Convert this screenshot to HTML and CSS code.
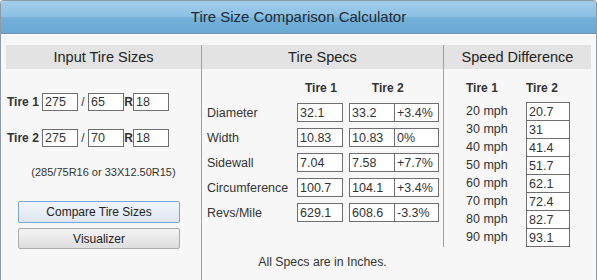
FILE: index.html
```html
<!DOCTYPE html>
<html lang="en">
<head>
    <meta charset="UTF-8">
    <title>Tire Size Comparison Calculator</title>
    <link rel="stylesheet" href="styles.css">
</head>
<body>
    <div class="calc">
        <div class="calc-title">Tire Size Comparison Calculator</div>
        <div class="calc-body">
            <div class="col col-input">
                <h2 class="col-head">Input Tire Sizes</h2>
                <div class="size-row">
                    <b class="size-label">Tire 1</b>
                    <input class="box size-box" value="275">
                    <span class="sep">/</span>
                    <input class="box size-box" value="65">
                    <b class="sep sep-r">R</b>
                    <input class="box size-box" value="18">
                </div>
                <div class="size-row">
                    <b class="size-label">Tire 2</b>
                    <input class="box size-box" value="275">
                    <span class="sep">/</span>
                    <input class="box size-box" value="70">
                    <b class="sep sep-r">R</b>
                    <input class="box size-box" value="18">
                </div>
                <p class="hint">(285/75R16 or 33X12.50R15)</p>
                <button class="btn btn-focus">Compare Tire Sizes</button>
                <button class="btn">Visualizer</button>
            </div>

            <div class="col col-specs">
                <h2 class="col-head">Tire Specs</h2>
                <div class="spec-head">
                    <b class="th-1">Tire 1</b>
                    <b class="th-2">Tire 2</b>
                </div>
                <div class="spec-grid">
                    <span>Diameter</span>
                    <input class="box t1" value="32.1">
                    <input class="box t2" value="33.2">
                    <input class="box pct" value="+3.4%">

                    <span>Width</span>
                    <input class="box t1" value="10.83">
                    <input class="box t2" value="10.83">
                    <input class="box pct" value="0%">

                    <span>Sidewall</span>
                    <input class="box t1" value="7.04">
                    <input class="box t2" value="7.58">
                    <input class="box pct" value="+7.7%">

                    <span>Circumference</span>
                    <input class="box t1" value="100.7">
                    <input class="box t2" value="104.1">
                    <input class="box pct" value="+3.4%">

                    <span>Revs/Mile</span>
                    <input class="box t1" value="629.1">
                    <input class="box t2" value="608.6">
                    <input class="box pct" value="-3.3%">
                </div>
                <p class="note">All Specs are in Inches.</p>
            </div>

            <div class="col col-speed">
                <h2 class="col-head">Speed Difference</h2>
                <div class="speed-head">
                    <b>Tire 1</b>
                    <b>Tire 2</b>
                </div>
                <div class="speed-grid">
                    <span>20 mph</span><input class="box" value="20.7">
                    <span>30 mph</span><input class="box" value="31">
                    <span>40 mph</span><input class="box" value="41.4">
                    <span>50 mph</span><input class="box" value="51.7">
                    <span>60 mph</span><input class="box" value="62.1">
                    <span>70 mph</span><input class="box" value="72.4">
                    <span>80 mph</span><input class="box" value="82.7">
                    <span>90 mph</span><input class="box" value="93.1">
                </div>
            </div>
        </div>
    </div>
</body>
</html>
```

FILE: styles.css
```css
body {
    margin: 0;
    font-family: "Liberation Sans", Arial, sans-serif;
    color: #333;
    background: #f7f7f7;
}
.calc {
    width: 595px;
    height: 290px;
    border: 1px solid #8e9aa4;
    border-bottom: none;
    border-radius: 4px 4px 0 0;
    background: #f7f7f7;
    overflow: hidden;
}
.calc-title {
    height: 32px;
    line-height: 32px;
    text-align: center;
    font-size: 15px;
    color: #1e2a33;
    background: linear-gradient(#a1cdea 0, #8cc1e4 48%, #74b1d9 52%, #6aaad5 100%);
    border-bottom: 1px solid #6b93b0;
    box-shadow: 0 1px 0 #fff;
}
.calc-body {
    display: flex;
    align-items: flex-start;
    padding: 11px 5px 0 5px;
}
.col {
    flex: none;
}
.col-head {
    margin: 0;
    height: 24px;
    line-height: 24px;
    background: #e3e3e3;
    text-align: center;
    font-size: 14.5px;
    font-weight: normal;
    color: #222;
}
.box {
    box-sizing: border-box;
    height: 19px;
    margin: 0;
    padding: 0 2px;
    border: 1px solid #6f6f6f;
    background: #fff;
    font-family: inherit;
    font-size: 12.5px;
    color: #333;
}

/* input column */
.col-input {
    width: 195px;
}
.size-row {
    display: flex;
    align-items: center;
    height: 18px;
    margin-top: 18px;
    padding-left: 1px;
    font-size: 12px;
}
.col-head + .size-row {
    margin-top: 24px;
}
.size-label {
    width: 35px;
}
.size-box {
    width: 36px;
    height: 18px;
}
.sep {
    width: 10px;
    text-align: center;
}
.sep-r {
    width: 9px;
}
.hint {
    margin: 19px 0 0;
    line-height: 13px;
    text-align: center;
    font-size: 11px;
}
.btn {
    display: block;
    box-sizing: border-box;
    width: 162px;
    height: 21px;
    margin: 5px 0 0 12px;
    border: 1px solid #acacac;
    border-radius: 2px;
    background: linear-gradient(#f3f3f3, #dedede);
    font-family: inherit;
    font-size: 12px;
    color: #222;
}
.btn-focus {
    height: 22px;
    margin-top: 22px;
    border-color: #7aa3d8;
    background: linear-gradient(#f1f5fb, #dfe6f0);
}

/* specs column */
.col-specs {
    width: 241px;
    height: 260px;
    border-left: 1px solid #a0a0a0;
}
.spec-head {
    display: flex;
    margin-top: 12px;
    height: 15px;
    font-size: 12px;
}
.th-1 {
    margin-left: 103px;
}
.th-2 {
    margin-left: 35px;
}
.spec-grid {
    display: grid;
    grid-template-columns: 90px 46px 52px 44px;
    grid-auto-rows: 19px;
    row-gap: 6px;
    align-items: center;
    margin-top: 7px;
    padding-left: 5px;
    font-size: 12.5px;
}
.spec-grid .t1 {
    width: 46px;
}
.spec-grid .t2 {
    margin-left: 6px;
    width: 46px;
}
.spec-grid .pct {
    margin-left: -1px;
    width: 45px;
}
.note {
    margin: 33px 0 0;
    text-align: center;
    font-size: 12.3px;
}

/* speed column */
.col-speed {
    width: 147px;
    border-left: 1px solid #a0a0a0;
}
.speed-head,
.speed-grid {
    display: grid;
    grid-template-columns: 60px 44px;
    padding-left: 22px;
}
.speed-head {
    margin-top: 12px;
    height: 15px;
    font-size: 12px;
}
.speed-grid {
    grid-auto-rows: 18px;
    align-items: start;
    margin-top: 6px;
    height: 145px;
    font-size: 12.5px;
}
.speed-grid span {
    line-height: 19px;
}
.speed-grid .box {
    width: 44px;
}
```
